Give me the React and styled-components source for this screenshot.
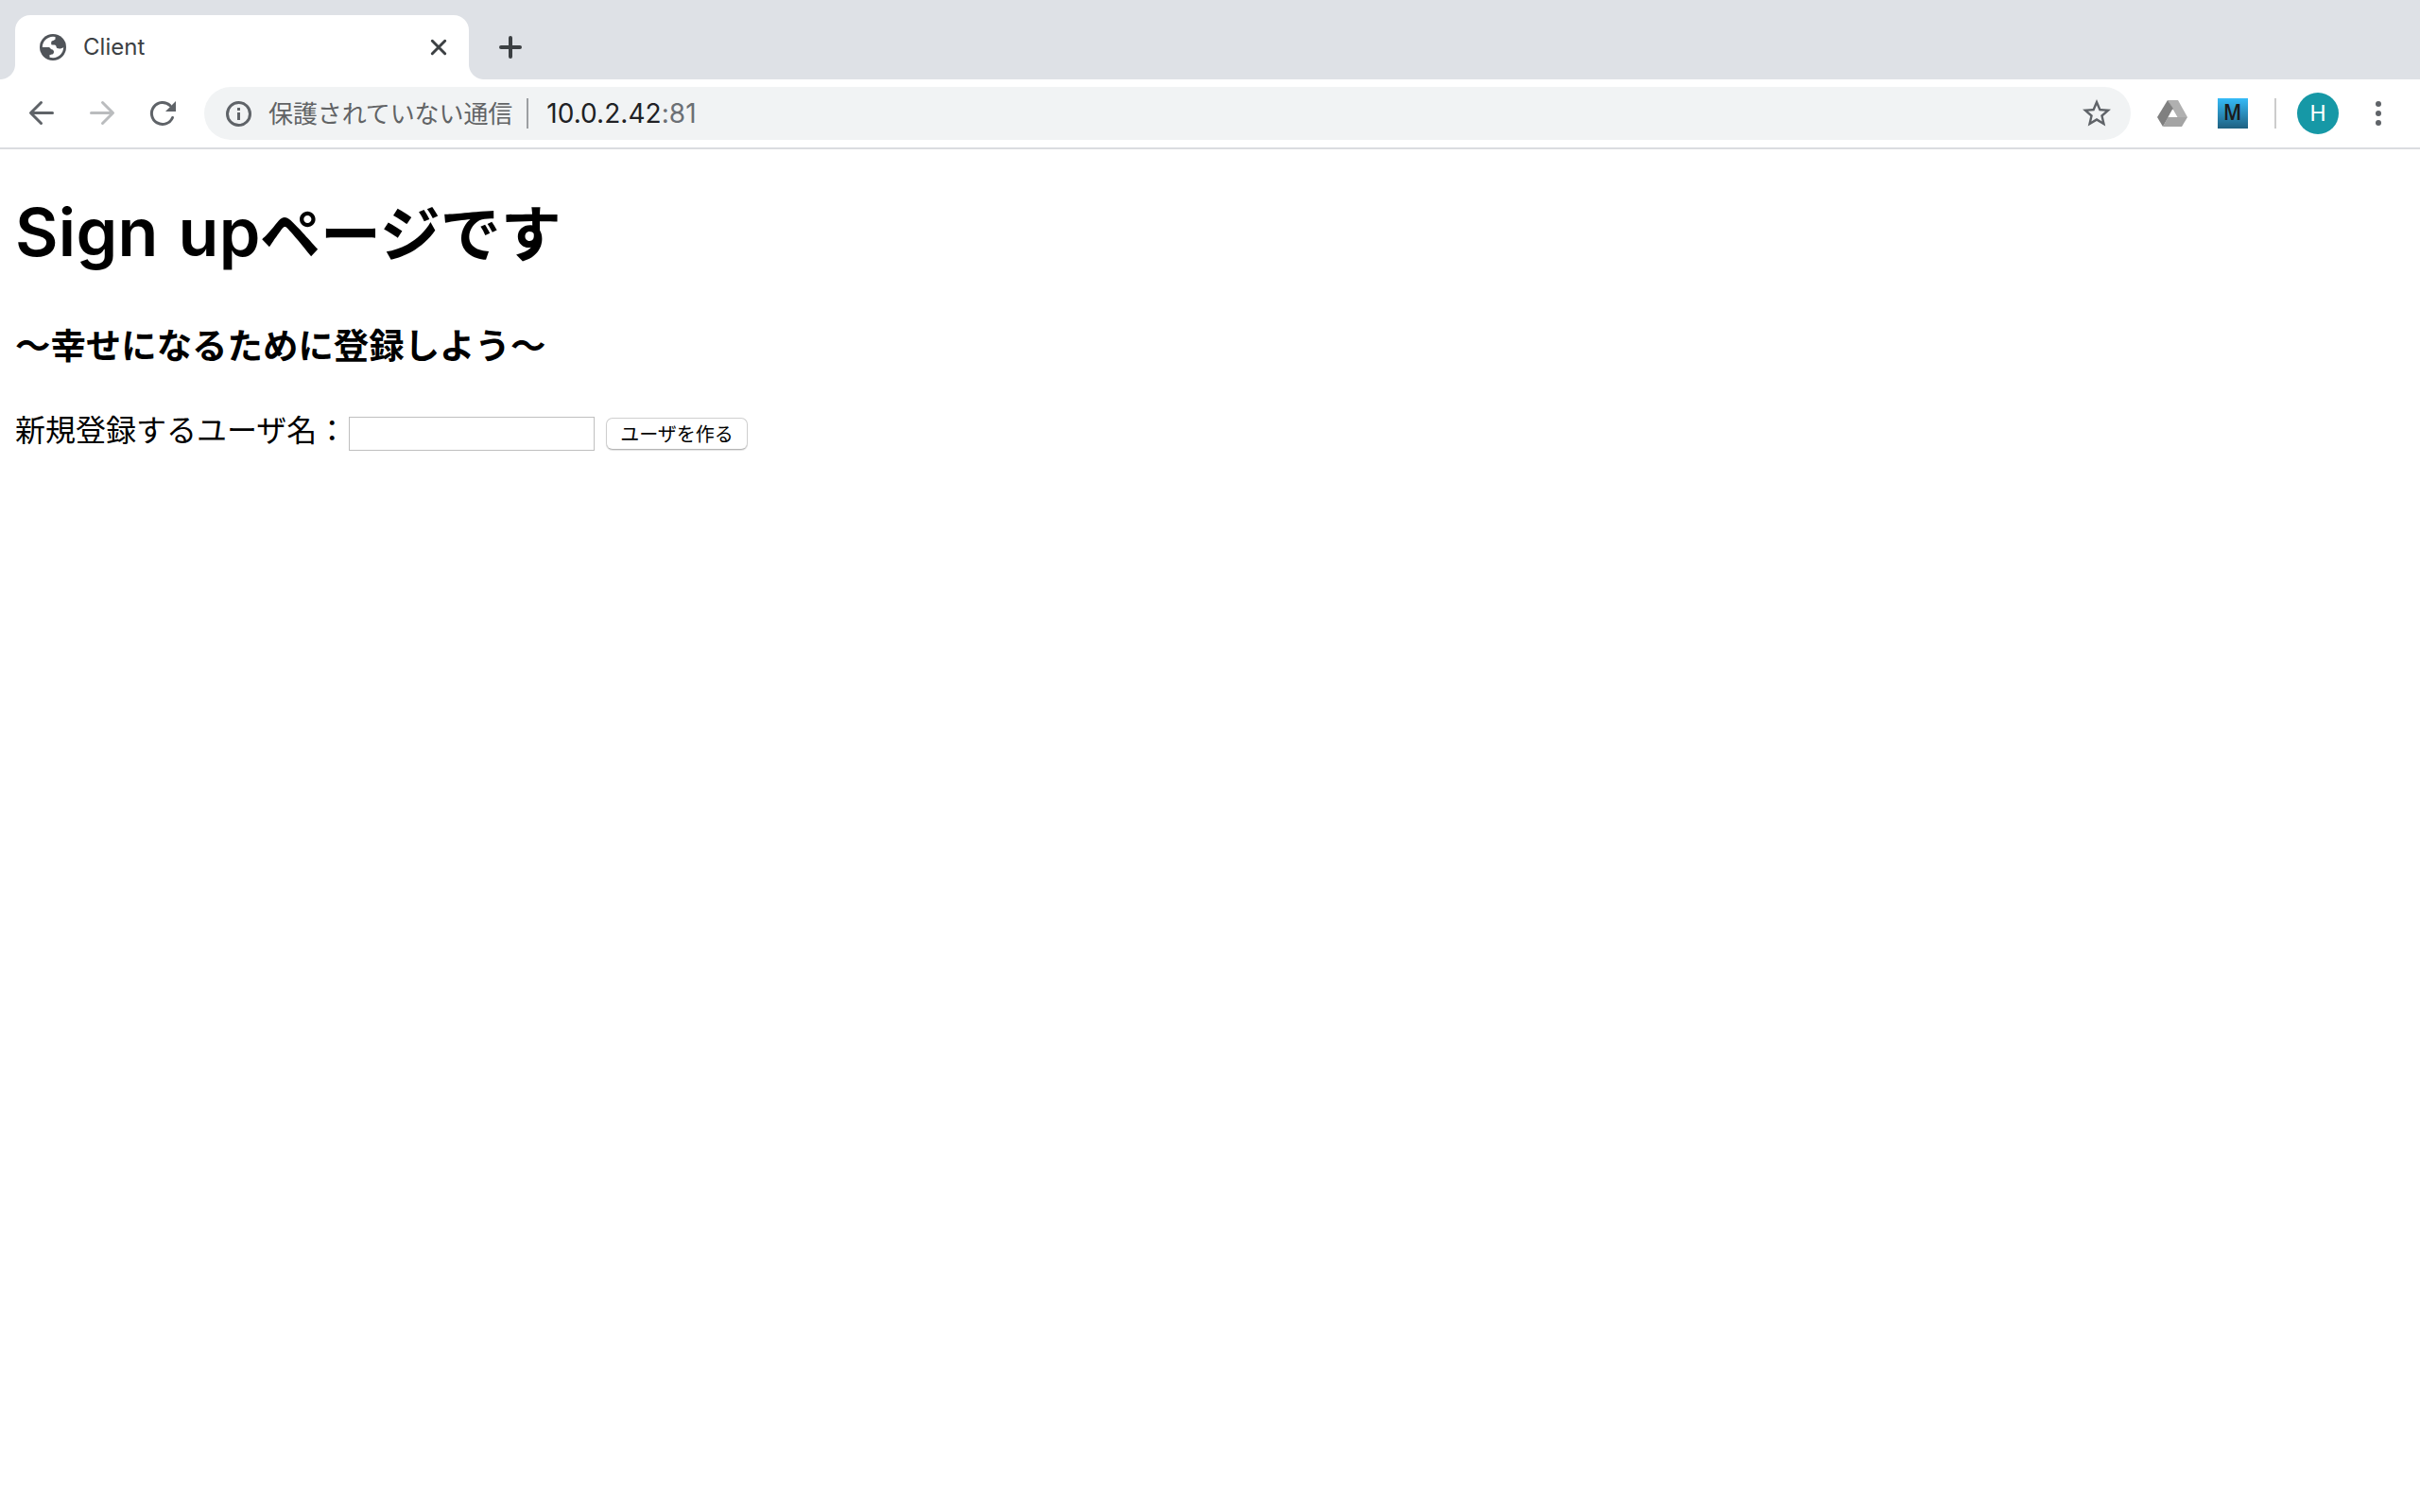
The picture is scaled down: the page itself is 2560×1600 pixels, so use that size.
import React from "react";
import styled, { createGlobalStyle } from "styled-components";

const ui = `Inter, "Noto Sans CJK JP", sans-serif`;
const jp = `"Noto Sans CJK JP", sans-serif`;

const Global = createGlobalStyle`
  * { box-sizing: border-box; }
  body { margin: 0; background: #fff; color: #000; font-family: ${ui}; }
`;

const Window = styled.div`
  width: 2560px;
  height: 1600px;
  overflow: hidden;
  display: flex;
  flex-direction: column;
  background: #fff;
`;

const TabStrip = styled.div`
  height: 84px;
  flex: none;
  display: flex;
  align-items: flex-end;
  background: #dee1e6;
`;

const Flare = styled.div`
  width: 16px;
  height: 16px;
  background: radial-gradient(circle at ${(p) => (p.$side === "left" ? "0 0" : "100% 0")}, transparent 15.5px, #fff 16.5px);
`;

const Tab = styled.div`
  width: 480px;
  height: 68px;
  padding: 0 18px 0 26px;
  display: flex;
  align-items: center;
  border-radius: 16px 16px 0 0;
  background: #fff;
`;

const TabTitle = styled.span`
  flex: 1;
  margin-left: 18px;
  font-size: 24px;
  line-height: 28px;
  letter-spacing: 0.05px;
  color: #3c4043;
`;

const Icon = styled.svg`
  display: block;
  flex: none;
  width: ${(p) => p.$size}px;
  height: ${(p) => p.$size}px;
`;

const NewTab = styled.div`
  height: 68px;
  padding-left: 16px;
  display: flex;
  align-items: center;
`;

const Toolbar = styled.div`
  height: 74px;
  flex: none;
  display: flex;
  align-items: center;
  padding: 0 24px;
  border-bottom: 2px solid #dadce0;
`;

const Nav = styled.div`
  width: 192px;
  display: flex;
  gap: 24px;
`;

const AddressBar = styled.div`
  width: 2038px;
  height: 56px;
  display: flex;
  align-items: center;
  padding: 0 18px 0 16px;
  border-radius: 28px;
  background: #f1f3f4;
`;

const Security = styled.span`
  margin: 0 15px 2px 12px;
  font-family: ${jp};
  font-size: 26px;
  line-height: 40px;
  letter-spacing: -0.1px;
  color: #616365;
`;

const Divider = styled.div`
  width: 2px;
  height: 32px;
  background: ${(p) => p.$color};
`;

const Url = styled.span`
  flex: 1;
  margin-left: 19px;
  font-size: 28px;
  line-height: 40px;
  letter-spacing: 0.05px;
  color: #202124;
`;

const Port = styled.span`
  color: #6b6f74;
`;

const Actions = styled.div`
  display: flex;
  align-items: center;
  margin-left: 28px;
`;

const Extension = styled.div`
  width: 32px;
  height: 32px;
  margin: 0 28px 0 32px;
  padding-bottom: 4px;
  display: flex;
  align-items: center;
  justify-content: center;
  background: linear-gradient(#35bbf8, #1f6080);
  font: 600 23px/28px "Noto Sans", sans-serif;
  color: #1b1b1b;
`;

const ExtensionLetter = styled.span`
  transform: scaleX(0.9);
`;

const Avatar = styled.div`
  width: 44px;
  height: 44px;
  margin: 0 22px;
  border-radius: 50%;
  display: flex;
  align-items: center;
  justify-content: center;
  background: #1698a6;
  font: 400 24px/44px Roboto, sans-serif;
  color: #fff;
`;

const Page = styled.main`
  padding: 37px 16px 0;
  font-family: ${jp};
`;

const Title = styled.h1`
  margin: 0;
  height: 96px;
  display: flex;
  align-items: baseline;
  font-size: 64px;
  line-height: 96px;
  font-weight: 700;
  white-space: nowrap;
`;

const Latin = styled.span`
  width: 259px;
  font-family: Inter, sans-serif;
  font-size: 70px;
  font-weight: 600;
  letter-spacing: 0.3px;
  word-spacing: 3px;
`;

const Subtitle = styled.h3`
  margin: 45px 0 0;
  font-size: 37.44px;
  line-height: 56px;
  font-weight: 700;
`;

const Form = styled.form`
  margin-top: 37px;
  display: flex;
  align-items: center;
`;

const Label = styled.label`
  width: 353px;
  font-size: 32px;
  line-height: 48px;
  white-space: nowrap;
`;

const NameInput = styled.input`
  width: 260px;
  height: 36px;
  margin: 11px 12px 0 0;
  padding: 0 4px;
  border: 1px solid #bfbfbf;
  border-radius: 0;
  background: #fff;
  font-size: 22px;
`;

const Submit = styled.button`
  width: 150px;
  height: 34px;
  margin: 11px 0 0;
  padding: 0;
  border: 1px solid #cfcfcf;
  border-bottom-color: #b5b5b5;
  border-radius: 7px;
  background: #fff;
  box-shadow: 0 1px 1px rgba(0, 0, 0, 0.12);
  font: 400 20px/30px ${jp};
  color: #000;
`;

export default function App() {
  return (
    <Window>
      <Global />
      <TabStrip>
        <Flare $side="left" />
        <Tab>
          <Icon $size={28} viewBox="0 0 28 28">
            <circle cx="14" cy="14" r="14" fill="#505459" />
            <path fill="#fff" d="M2.8 14C3 7.5 8 3 14 2.8l2.5.3v2.4c-1 1.5-4 1.3-4.3 3.2v2.6c1.5.4 3-.2 4.3.5 1.5.9.8 2.8 2 3.3 2.5.8 5 .3 6.7-1.1C25 20.5 20 25.3 14 25.2l-3.5-.5V22c2 0 4.5-.3 4.5-3.2 0-1.3-.8-2.3-2.5-2.6-1.3-.2-1-1.8-2.7-2.2z" />
          </Icon>
          <TabTitle>Client</TabTitle>
          <Icon $size={28} viewBox="0 0 28 28" stroke="#3c4043" strokeWidth="3" strokeLinecap="round">
            <path d="M7.3 7.3 20.7 20.7M20.7 7.3 7.3 20.7" />
          </Icon>
        </Tab>
        <Flare $side="right" />
        <NewTab>
          <Icon $size={24} viewBox="0 0 24 24" stroke="#3c4043" strokeWidth="4" strokeLinecap="round">
            <path d="M12 2v20M2 12h20" />
          </Icon>
        </NewTab>
      </TabStrip>
      <Toolbar>
        <Nav>
          <Icon $size={40} viewBox="0 0 40 40" fill="none" stroke="#5f6368" strokeWidth="3" strokeLinecap="round" strokeLinejoin="round">
            <path d="M31.5 19.5H9M19.5 8.5 8.5 19.5l11 11" />
          </Icon>
          <Icon $size={40} viewBox="0 0 40 40" fill="none" stroke="#babcbe" strokeWidth="3" strokeLinecap="round" strokeLinejoin="round">
            <path d="M8.5 19.5H31M20.5 8.5l11 11-11 11" />
          </Icon>
          <Icon $size={40} viewBox="0 0 40 40" fill="none">
            <path d="M30.5 24.5A11.5 11.5 0 1 1 28 11.8" stroke="#5f6368" strokeWidth="3" strokeLinecap="round" />
            <path d="M34 7v11H23z" fill="#5f6368" />
          </Icon>
        </Nav>
        <AddressBar>
          <Icon $size={40} viewBox="0 0 40 40" fill="none">
            <circle cx="20.5" cy="20.5" r="12" stroke="#5f6368" strokeWidth="3" />
            <path d="M19 19h3v8h-3zM19 14h3v3h-3z" fill="#5f6368" />
          </Icon>
          <Security>保護されていない通信</Security>
          <Divider $color="#9c9fa2" />
          <Url>10.0.2.42<Port>:81</Port></Url>
          <Icon $size={36} viewBox="0 0 24 24" fill="#5f6368">
            <path d="M22 9.24l-7.19-.62L12 2 9.19 8.63 2 9.24l5.46 4.73L5.82 21 12 17.27 18.18 21l-1.63-7.03L22 9.24zM12 15.4l-3.76 2.27 1-4.28-3.32-2.88 4.38-.38L12 6.1l1.71 4.04 4.38.38-3.32 2.88 1 4.28L12 15.4z" />
          </Icon>
        </AddressBar>
        <Actions>
          <Icon $size={32} viewBox="0 0 32 32">
            <path d="M11 2h11l10 18H21.5z" fill="#b0b0b0" />
            <path d="M11 2 0 20l6 10 11-19z" fill="#808080" />
            <path d="M6 30h20l6-10H11.5z" fill="#a4a4a4" />
            <path d="M16.2 11.5 20.5 20h-9z" fill="#fff" />
          </Icon>
          <Extension><ExtensionLetter>M</ExtensionLetter></Extension>
          <Divider $color="#cccccc" />
          <Avatar>H</Avatar>
          <Icon $size={40} viewBox="0 0 40 40" fill="#5f6368">
            <circle cx="20" cy="10" r="3" />
            <circle cx="20" cy="20" r="3" />
            <circle cx="20" cy="30" r="3" />
          </Icon>
        </Actions>
      </Toolbar>
      <Page>
        <Title><Latin>Sign up</Latin>ページです</Title>
        <Subtitle>〜幸せになるために登録しよう〜</Subtitle>
        <Form>
          <Label htmlFor="user">新規登録するユーザ名：</Label>
          <NameInput id="user" type="text" />
          <Submit type="button">ユーザを作る</Submit>
        </Form>
      </Page>
    </Window>
  );
}
